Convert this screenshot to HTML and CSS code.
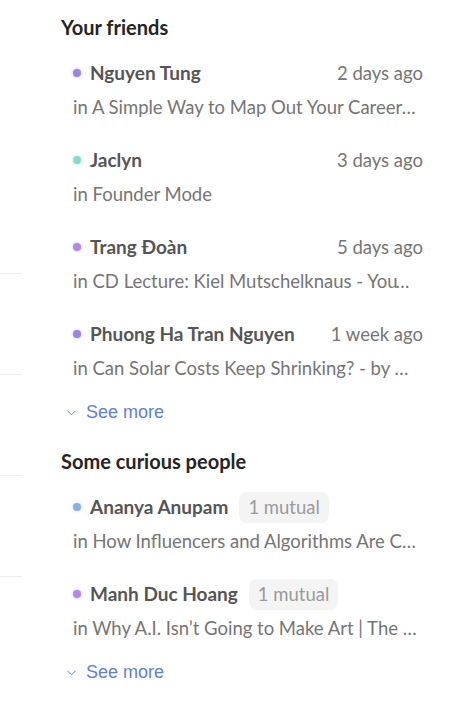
FILE: index.html
```html
<!DOCTYPE html>
<html>
<head>
<meta charset="utf-8">
<link rel="stylesheet" href="styles.css">
</head>
<body>
<div class="page">
  <div class="stub">
    <div class="stub-item"></div>
    <div class="stub-item"></div>
    <div class="stub-item"></div>
    <div class="stub-item"></div>
  </div>
  <div class="main">
    <section class="group">
      <h2 class="group-title">Your friends</h2>
      <ul class="list">
        <li class="item">
          <div class="item-head"><span class="dot dot-violet"></span><span class="name">Nguyen Tung</span><span class="time">2 days ago</span></div>
          <div class="item-sub">in A Simple Way to Map Out Your Career Path in 2024</div>
        </li>
        <li class="item">
          <div class="item-head"><span class="dot dot-teal"></span><span class="name">Jaclyn</span><span class="time">3 days ago</span></div>
          <div class="item-sub">in Founder Mode</div>
        </li>
        <li class="item">
          <div class="item-head"><span class="dot dot-lilac"></span><span class="name">Trang Đoàn</span><span class="time">5 days ago</span></div>
          <div class="item-sub">in CD Lecture: Kiel Mutschelknaus - YouTube</div>
        </li>
        <li class="item">
          <div class="item-head"><span class="dot dot-violet"></span><span class="name">Phuong Ha Tran Nguyen</span><span class="time">1 week ago</span></div>
          <div class="item-sub">in Can Solar Costs Keep Shrinking? - by Brian Potter</div>
        </li>
      </ul>
      <a class="see-more" href="#"><svg class="chev" width="9" height="6" viewBox="0 0 9 6"><path d="M0.5 0.8 L4.5 4.8 L8.5 0.8" fill="none" stroke="currentColor" stroke-width="1"/></svg>See more</a>
    </section>
    <section class="group group-second">
      <h2 class="group-title">Some curious people</h2>
      <ul class="list">
        <li class="item">
          <div class="item-head"><span class="dot dot-blue"></span><span class="name">Ananya Anupam</span><span class="badge">1 mutual</span></div>
          <div class="item-sub">in How Influencers and Algorithms Are Changing Taste</div>
        </li>
        <li class="item">
          <div class="item-head"><span class="dot dot-lilac"></span><span class="name">Manh Duc Hoang</span><span class="badge">1 mutual</span></div>
          <div class="item-sub">in Why A.I. Isn’t Going to Make Art | The New Yorker</div>
        </li>
      </ul>
      <a class="see-more" href="#"><svg class="chev" width="9" height="6" viewBox="0 0 9 6"><path d="M0.5 0.8 L4.5 4.8 L8.5 0.8" fill="none" stroke="currentColor" stroke-width="1"/></svg>See more</a>
    </section>
  </div>
</div>
</body>
</html>
```
FILE: styles.css
```css
html, body {
  margin: 0;
  padding: 0;
  background: #ffffff;
}
body {
  font-family: "Lato", "Noto Sans", sans-serif;
  width: 459px;
  height: 702px;
  overflow: hidden;
}
.page {
  display: grid;
  grid-template-columns: 22px 362px;
  column-gap: 39px;
}
.stub {
  padding-top: 173px;
}
.stub-item {
  height: 100px;
  border-bottom: 1px solid #eeeeee;
}
.main {
  padding-top: 15px;
}
.group-title {
  margin: 0;
  font-size: 20px;
  line-height: 24px;
  font-weight: 700;
  color: #242424;
}
.list {
  list-style: none;
  margin: 22px 0 0 0;
  padding: 0 0 0 12px;
  display: flex;
  flex-direction: column;
  gap: 29px;
}
.item {
  display: flex;
  flex-direction: column;
  gap: 10px;
}
.item-head {
  display: flex;
  align-items: center;
  height: 24px;
  font-size: 18.5px;
  line-height: 24px;
}
.dot {
  width: 8px;
  height: 8px;
  border-radius: 50%;
  margin-right: 9px;
  flex: none;
}
.dot-violet { background: #9c86e4; box-shadow: 0 0 3px rgba(156, 134, 228, 0.6); }
.dot-teal { background: #84dccf; box-shadow: 0 0 3px rgba(132, 220, 207, 0.6); }
.dot-lilac { background: #b08be6; box-shadow: 0 0 3px rgba(176, 139, 230, 0.6); }
.dot-blue { background: #8ab0e2; box-shadow: 0 0 3px rgba(138, 176, 226, 0.6); }
.name {
  font-size: 19px;
  font-weight: 700;
  color: #555555;
}
.time {
  margin-left: auto;
  color: #757575;
}
.badge {
  margin-left: 11px;
  padding: 3px 9px;
  border-radius: 8px;
  background: #f4f4f4;
  color: #9a9a9a;
  line-height: 25px;
}
.item-sub {
  font-size: 18.5px;
  line-height: 24px;
  color: #757575;
  white-space: nowrap;
  overflow: hidden;
  text-overflow: ellipsis;
  margin-right: 5px;
}
.see-more {
  display: flex;
  align-items: center;
  margin-top: 20px;
  margin-left: 6px;
  font-family: "Liberation Sans", Arial, sans-serif;
  font-size: 18px;
  line-height: 24px;
  color: #5f7fd4;
  text-decoration: none;
  width: max-content;
}
.chev {
  margin-right: 10px;
  margin-top: 2px;
}
.group-second {
  margin-top: 25px;
}
```
